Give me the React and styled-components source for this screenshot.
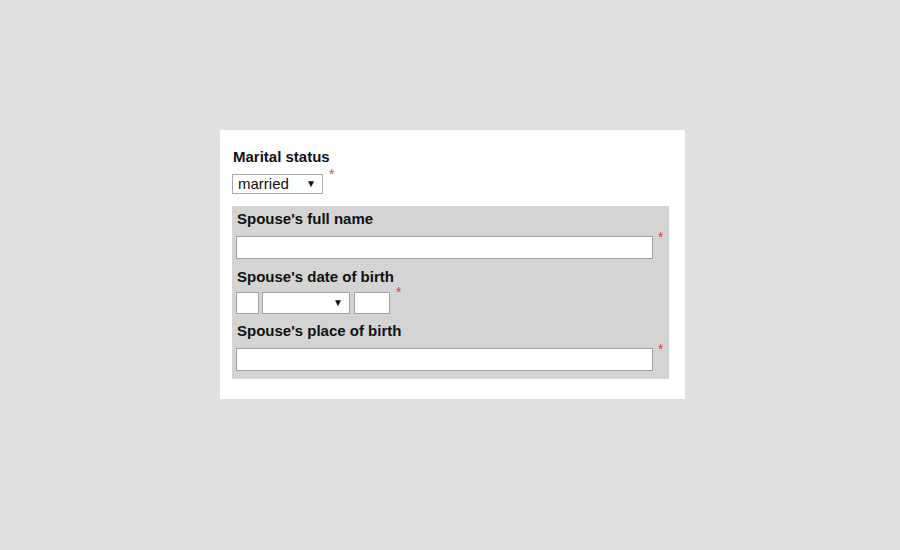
import React from "react";
import styled, { createGlobalStyle } from "styled-components";

const GlobalStyle = createGlobalStyle`
  html, body {
    margin: 0;
    padding: 0;
    background: #e0e0e0;
    font-family: "Liberation Sans", Arial, sans-serif;
  }
`;

const Page = styled.div`
  width: 900px;
  height: 550px;
  display: flex;
  justify-content: flex-start;
  align-items: flex-start;
  padding: 130px 0 0 220px;
  box-sizing: border-box;
`;

const Card = styled.div`
  width: 465px;
  height: 269px;
  box-sizing: border-box;
  background: #fff;
  padding: 19px 16px 0 12px;
`;

const Label = styled.div`
  font-size: 15px;
  font-weight: bold;
  color: #111;
  line-height: 15px;
  height: 19px;
  padding-left: 1px;
`;

const Row = styled.div`
  display: flex;
  align-items: flex-start;
  margin-top: ${(p) => p.mt || 0}px;
`;

const Star = styled.span`
  color: #e23a3a;
  font-size: 14px;
  line-height: 13px;
  margin-left: ${(p) => p.ml || 5}px;
  margin-top: ${(p) => p.mt || -3}px;
`;

const SelectBox = styled.div`
  position: relative;
  width: ${(p) => p.w}px;
  height: ${(p) => p.h}px;
  margin-left: ${(p) => p.ml || 0}px;
  box-sizing: border-box;
  border: 1px solid ${(p) => p.border || "#a9a9a9"};
  background: #fff;
  font-size: 15px;
  color: #111;
  line-height: ${(p) => p.h - 2}px;
  padding-left: 5px;
`;

const Arrow = styled.span`
  position: absolute;
  right: 6px;
  top: 0;
  font-size: 10px;
  color: #111;
`;

const Panel = styled.div`
  margin-top: 12px;
  background: #d4d4d4;
  padding: 5px 0 8px 4px;
  width: 437px;
  box-sizing: border-box;
`;

const TextInput = styled.div`
  width: ${(p) => p.w}px;
  height: ${(p) => p.h || 23}px;
  margin-left: ${(p) => p.ml || 0}px;
  box-sizing: border-box;
  background: #fff;
  border: 1px solid #a0a0a0;
`;

const Field = styled.div`
  margin-top: ${(p) => p.mt || 0}px;
`;

export default function App() {
  return (
    <>
      <GlobalStyle />
      <Page>
        <Card>
          <Label>Marital status</Label>
          <Row mt={6}>
            <SelectBox w={91} h={20}>
              married
              <Arrow>▼</Arrow>
            </SelectBox>
            <Star ml={6} mt={-6}>*</Star>
          </Row>
          <Panel>
            <Field>
              <Label>Spouse's full name</Label>
              <Row mt={6}>
                <TextInput w={417} />
                <Star ml={5} mt={-5}>*</Star>
              </Row>
            </Field>
            <Field mt={10}>
              <Label>Spouse's date of birth</Label>
              <Row mt={4}>
                <TextInput w={23} h={22} />
                <SelectBox w={88} h={22} ml={3} border="#a0a0a0">
                  <Arrow>▼</Arrow>
                </SelectBox>
                <TextInput w={36} h={22} ml={4} />
                <Star ml={6} mt={-6}>*</Star>
              </Row>
            </Field>
            <Field mt={9}>
              <Label>Spouse's place of birth</Label>
              <Row mt={6}>
                <TextInput w={417} />
                <Star ml={5} mt={-5}>*</Star>
              </Row>
            </Field>
          </Panel>
        </Card>
      </Page>
    </>
  );
}
